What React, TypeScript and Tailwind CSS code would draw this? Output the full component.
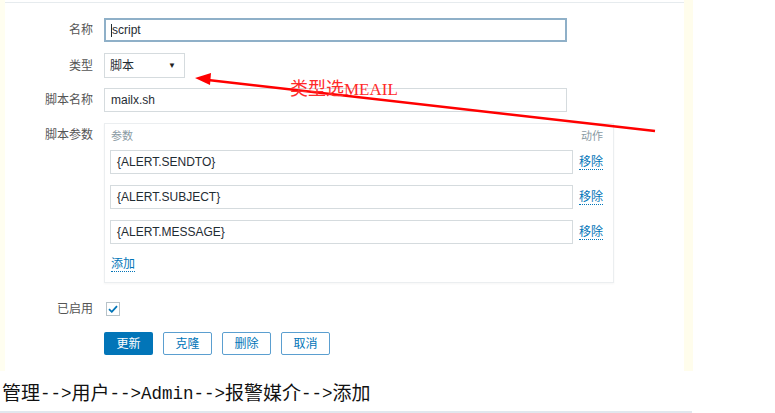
import React from "react";

const sans = { fontFamily: '"Liberation Sans", Arial, "Noto Sans CJK SC", sans-serif' };

function Label({ children, className = "" }: { children: React.ReactNode; className?: string }) {
  return (
    <div className={`w-[88px] shrink-0 text-right text-[12px] text-[#555] leading-[24px] ${className}`}>{children}</div>
  );
}

function ParamRow({ value }: { value: string }) {
  return (
    <div className="flex items-center">
      <div className="w-[463px] h-[24px] border border-[#d5dbde] bg-white px-[6px] text-[12px] leading-[22px] text-[#1f2c33]">
        {value}
      </div>
      <span className="ml-[6px] text-[12px] text-[#0275b8] border-b border-dotted border-[#0275b8] leading-[14px]">移除</span>
    </div>
  );
}

export default function App() {
  return (
    <div className="relative w-[775px] h-[413px] bg-white overflow-hidden" style={sans}>
      {/* screenshot area */}
      <div className="flex h-[371px] w-[693px]">
        <div className="w-[5px] bg-[#fffef0]" />
        <div className="w-[679px] flex flex-col">
          <div className="mt-[2px] h-[1px] bg-[#e6ebee]" />
          <div className="flex flex-col gap-[11px] pt-[15px]">
            {/* 名称 */}
            <div className="flex items-center gap-[11px]">
              <Label>名称</Label>
              <div className="w-[463px] h-[24px] border-2 border-[#8fb0c8] bg-white px-[5px] text-[12px] leading-[20px] text-[#1f2c33] flex items-center">
                <span className="w-[1px] h-[13px] bg-[#1f2c33]" />
                <span>script</span>
              </div>
            </div>
            {/* 类型 */}
            <div className="flex items-center gap-[11px]">
              <Label>类型</Label>
              <div className="w-[81px] h-[25px] border border-[#d5dbde] bg-white pl-[5px] pr-[8px] flex items-center justify-between text-[12px] text-[#1f2c33]">
                <span>脚本</span>
                <span className="text-[8px] text-[#222]">▼</span>
              </div>
            </div>
            {/* 脚本名称 */}
            <div className="flex items-center gap-[11px] -mt-[1px]">
              <Label>脚本名称</Label>
              <div className="w-[463px] h-[24px] border border-[#d5dbde] bg-white px-[6px] text-[12px] leading-[22px] text-[#1f2c33]">
                mailx.sh
              </div>
            </div>
            {/* 脚本参数 */}
            <div className="flex items-start gap-[11px]">
              <Label>脚本参数</Label>
              <div className="w-[510px] h-[160px] border border-[#ebeef0] bg-white pl-[5px] pr-[9px] pt-[4px] shadow-[0_1px_2px_rgba(0,0,0,0.04)]">
                <div className="flex justify-between h-[16px] text-[11px] leading-[16px] text-[#8a9aa3] pl-[1px]">
                  <span>参数</span>
                  <span className="mr-[1px]">动作</span>
                </div>
                <div className="mt-[6px] flex flex-col gap-[11px]">
                  <ParamRow value="{ALERT.SENDTO}" />
                  <ParamRow value="{ALERT.SUBJECT}" />
                  <ParamRow value="{ALERT.MESSAGE}" />
                </div>
                <div className="mt-[7px] pl-[1px]">
                  <span className="text-[12px] text-[#0275b8] border-b border-dotted border-[#0275b8] leading-[14px]">添加</span>
                </div>
              </div>
            </div>
            {/* 已启用 */}
            <div className="flex items-center gap-[11px] mt-[3px]">
              <Label>已启用</Label>
              <div className="ml-[2px] w-[14px] h-[14px] border border-[#b8c3c9] bg-white flex items-center justify-center">
                <svg width="10" height="8" viewBox="0 0 10 8">
                  <path d="M1 4.2 L3.8 6.8 L9 1.2" fill="none" stroke="#0275b8" strokeWidth="1.8" />
                </svg>
              </div>
            </div>
            {/* buttons */}
            <div className="flex items-center gap-[10px] pl-[99px]">
              <div className="w-[49px] h-[23px] rounded-[2px] bg-[#0275b8] text-white text-[12px] flex items-center justify-center">更新</div>
              <div className="w-[49px] h-[23px] rounded-[2px] border border-[#5b9fd0] bg-white text-[#0275b8] text-[12px] flex items-center justify-center">克隆</div>
              <div className="w-[49px] h-[23px] rounded-[2px] border border-[#5b9fd0] bg-white text-[#0275b8] text-[12px] flex items-center justify-center">删除</div>
              <div className="w-[49px] h-[23px] rounded-[2px] border border-[#5b9fd0] bg-white text-[#0275b8] text-[12px] flex items-center justify-center">取消</div>
            </div>
          </div>
        </div>
        <div className="w-[9px] bg-[#fffdec]" />
      </div>

      {/* caption */}
      <div
        className="h-[40px] flex items-center pt-[6px] pl-[2px] text-[19px] text-[#111]"
        style={{ fontFamily: '"Liberation Serif", "Noto Sans CJK SC", serif' }}
      >
        <span>管理</span>
        <span className="text-[17.5px]" style={{ fontFamily: '"Liberation Mono", monospace' }}>--&gt;</span>
        <span>用户</span>
        <span className="text-[17.5px]" style={{ fontFamily: '"Liberation Mono", monospace' }}>--&gt;Admin--&gt;</span>
        <span>报警媒介</span>
        <span className="text-[17.5px]" style={{ fontFamily: '"Liberation Mono", monospace' }}>--&gt;</span>
        <span>添加</span>
      </div>
      <div className="h-[2px] w-[692px] bg-[#e1e7ee]" />

      {/* annotation overlay */}
      <svg className="absolute left-0 top-0 pointer-events-none" width="775" height="413">
        <line x1="655" y1="131" x2="208" y2="80" stroke="#ff0000" strokeWidth="2.6" />
        <polygon points="195,78 211,73 210,85" fill="#ff0000" />
      </svg>
      <div
        className="absolute left-[290px] top-[78px] text-[18px] leading-[22px] text-[#ff2a2a]"
        style={{ fontFamily: '"Liberation Serif", "Noto Sans CJK SC", serif' }}
      >
        类型选<span className="text-[17px]">MEAIL</span>
      </div>
    </div>
  );
}
